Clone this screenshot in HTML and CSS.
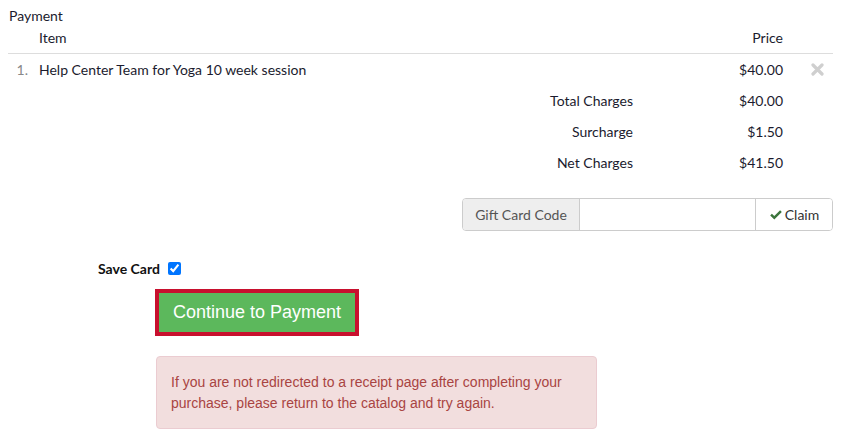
FILE: index.html
```html
<!DOCTYPE html>
<html>
<head>
<meta charset="utf-8">
<link rel="stylesheet" href="styles.css">
</head>
<body>
<div class="payment">
  <div class="title">Payment</div>
  <div class="cart">
    <div class="row head">
      <div class="num"></div>
      <div class="item">Item</div>
      <div class="price">Price</div>
      <div class="del"></div>
    </div>
    <div class="row">
      <div class="num">1.</div>
      <div class="item">Help Center Team for Yoga 10 week session</div>
      <div class="price">$40.00</div>
      <div class="del">
        <svg width="13" height="13" viewBox="0 0 13 13"><path d="M2 2 L11 11 M11 2 L2 11" stroke="#cfcfcf" stroke-width="3.2" stroke-linecap="round"/></svg>
      </div>
    </div>
    <div class="row">
      <div class="num"></div>
      <div class="label">Total Charges</div>
      <div class="price">$40.00</div>
      <div class="del"></div>
    </div>
    <div class="row">
      <div class="num"></div>
      <div class="label">Surcharge</div>
      <div class="price">$1.50</div>
      <div class="del"></div>
    </div>
    <div class="row">
      <div class="num"></div>
      <div class="label">Net Charges</div>
      <div class="price">$41.50</div>
      <div class="del"></div>
    </div>
  </div>
  <div class="gift-wrap">
    <div class="gift">
      <span class="addon">Gift Card Code</span>
      <input class="code" type="text">
      <button class="claim" type="button">
        <svg width="14" height="12" viewBox="0 0 14 12"><path d="M1.2 6.4 L2.9 4.7 L5.3 7.1 L11.1 1.3 L12.8 3 L5.3 10.5 Z" fill="#3c763d"/></svg>Claim
      </button>
    </div>
  </div>
  <div class="save">
    <label class="save-label">Save Card</label>
    <input class="save-check" type="checkbox" checked>
  </div>
  <div class="actions">
    <button class="continue" type="button">Continue to Payment</button>
  </div>
  <div class="alert">If you are not redirected to a receipt page after completing your purchase, please return to the catalog and try again.</div>
</div>
</body>
</html>
```
FILE: styles.css
```css
html, body {
  margin: 0;
  padding: 0;
  background: #fff;
}
body {
  padding: 8px;
  font-family: Lato, "Open Sans", sans-serif;
  font-size: 14px;
  color: #1b1b2e;
}
.payment {
  width: 825px;
}
.title {
  line-height: 16px;
  padding-left: 1px;
}
.row {
  display: grid;
  grid-template-columns: 31px 1fr 150px 50px;
  line-height: 21px;
  padding: 5px 0;
}
.row.head {
  padding: 4px 0 5px;
  line-height: 20px;
  border-bottom: 1px solid #dddddd;
}
.num {
  color: #888;
  text-align: right;
  padding-right: 11px;
}
.label {
  text-align: right;
}
.price {
  text-align: right;
}
.del {
  display: flex;
  align-items: center;
  justify-content: flex-end;
  padding-right: 9px;
}
.gift-wrap {
  display: flex;
  justify-content: flex-end;
  margin-top: 20px;
}
.gift {
  display: flex;
  height: 33px;
  width: 371px;
  box-sizing: border-box;
  border: 1px solid #cccccc;
  border-radius: 4px;
  overflow: hidden;
}
.addon {
  width: 116px;
  background: #eeeeee;
  border-right: 1px solid #cccccc;
  color: #555;
  display: flex;
  align-items: center;
  justify-content: center;
  font-size: 14px;
}
.code {
  flex: 1;
  border: 0;
  margin: 0;
  padding: 0 10px;
  outline: none;
  min-width: 0;
}
.claim {
  width: 77px;
  border: 0;
  border-left: 1px solid #cccccc;
  background: #fff;
  font-family: Lato, sans-serif;
  font-size: 14px;
  color: #333;
  display: flex;
  align-items: center;
  justify-content: center;
  gap: 2px;
  padding: 0;
}
.save {
  display: flex;
  align-items: center;
  margin-top: 28px;
  padding-left: 90px;
  height: 18px;
}
.save-label {
  font-weight: bold;
  color: #111;
}
.save-check {
  margin: 0 0 0 8px;
  width: 13px;
  height: 13px;
  accent-color: #0075ff;
}
.actions {
  margin-top: 12px;
  padding-left: 147px;
}
.continue {
  display: block;
  width: 204px;
  height: 47px;
  box-sizing: border-box;
  background: #5cb85c;
  border: 4px solid #c8102e;
  color: #fff;
  font-family: "Liberation Sans", Arial, sans-serif;
  font-size: 18px;
  padding: 0;
}
.alert {
  margin: 20px 0 0 148px;
  width: 441px;
  box-sizing: border-box;
  padding: 15px 14px 14px;
  background: #f2dede;
  border: 1px solid #ebccd1;
  border-radius: 4px;
  color: #a94442;
  font-family: "Liberation Sans", Arial, sans-serif;
  font-size: 14px;
  line-height: 21px;
}
```
